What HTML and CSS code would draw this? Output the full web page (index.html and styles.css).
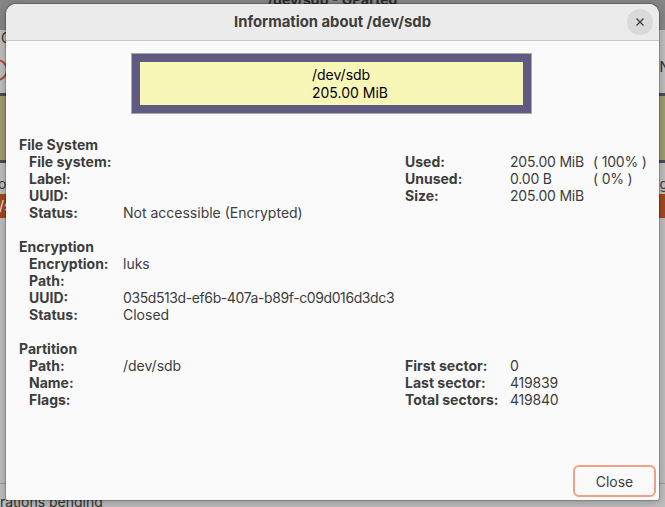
FILE: index.html
```html
<!DOCTYPE html>
<html lang="en">
<head>
<meta charset="utf-8">
<title>Information about /dev/sdb</title>
<link rel="stylesheet" href="styles.css">
</head>
<body>
<div class="app">
  <div class="app-title"><span>/dev/sdb - GParted</span></div>
  <div class="app-menu"><span>G</span></div>
  <div class="app-toolbar">
    <span class="tb-icon"></span>
    <span class="tb-right">N</span>
  </div>
  <div class="app-graph"><div class="graph-inner"></div></div>
  <div class="app-head">
    <span class="head-left">o</span>
    <span class="head-right">g</span>
  </div>
  <div class="app-row"><span class="row-left">/s</span></div>
  <div class="app-list"></div>
  <div class="app-status"><span>0 operations pending</span></div>
</div>

<div class="dialog">
  <header class="dlg-head">
    <span></span>
    <h1 class="dlg-title">Information about /dev/sdb</h1>
    <button class="dlg-x" aria-label="Close">
      <svg width="10" height="10" viewBox="0 0 10 10"><path d="M1.5 1.5 L8.5 8.5 M8.5 1.5 L1.5 8.5" stroke="#3d3d3d" stroke-width="1.3" fill="none"/></svg>
    </button>
  </header>

  <main class="dlg-body">
    <div class="part-graphic">
      <div class="part-inner">
        <span>/dev/sdb</span>
        <span>205.00 MiB</span>
      </div>
    </div>

    <section class="info">
      <div class="sec-title">File System</div>
      <div class="sec-cols">
        <div class="col-l">
          <span class="lbl">File system:</span><span class="val"></span>
          <span class="lbl">Label:</span><span class="val"></span>
          <span class="lbl">UUID:</span><span class="val"></span>
          <span class="lbl">Status:</span><span class="val">Not accessible (Encrypted)</span>
        </div>
        <div class="col-r">
          <span class="lbl">Used:</span><span class="val num">205.00 MiB</span><span class="val num">( 100% )</span>
          <span class="lbl">Unused:</span><span class="val num">0.00 B</span><span class="val num">( 0% )</span>
          <span class="lbl">Size:</span><span class="val num">205.00 MiB</span><span class="val"></span>
        </div>
      </div>
    </section>

    <section class="info">
      <div class="sec-title">Encryption</div>
      <div class="sec-cols">
        <div class="col-l">
          <span class="lbl">Encryption:</span><span class="val">luks</span>
          <span class="lbl">Path:</span><span class="val"></span>
          <span class="lbl">UUID:</span><span class="val uuid">035d513d-ef6b-407a-b89f-c09d016d3dc3</span>
          <span class="lbl">Status:</span><span class="val">Closed</span>
        </div>
      </div>
    </section>

    <section class="info">
      <div class="sec-title">Partition</div>
      <div class="sec-cols">
        <div class="col-l">
          <span class="lbl">Path:</span><span class="val">/dev/sdb</span>
          <span class="lbl">Name:</span><span class="val"></span>
          <span class="lbl">Flags:</span><span class="val"></span>
        </div>
        <div class="col-r">
          <span class="lbl">First sector:</span><span class="val num">0</span><span class="val"></span>
          <span class="lbl">Last sector:</span><span class="val num">419839</span><span class="val"></span>
          <span class="lbl">Total sectors:</span><span class="val num">419840</span><span class="val"></span>
        </div>
      </div>
    </section>
  </main>

  <footer class="dlg-foot">
    <button class="btn-close">Close</button>
  </footer>
</div>
</body>
</html>
```

FILE: styles.css
```css
* { box-sizing: border-box; }

html, body {
  margin: 0;
  padding: 0;
}

body {
  width: 665px;
  height: 507px;
  overflow: hidden;
  position: relative;
  background: #bcbcbc;
  font-family: Inter, "Noto Sans", sans-serif;
  font-size: 14px;
  color: #3d3d3d;
}

/* ---------- background GParted window (dimmed) ---------- */
.app {
  display: flex;
  flex-direction: column;
  height: 507px;
}

.app-title {
  height: 30px;
  background: #858585;
  text-align: center;
  font-weight: bold;
  color: #2a2a2a;
  line-height: 0;
}

.app-menu {
  height: 16px;
  background: #bdbdbd;
  line-height: 16px;
  padding-left: 1px;
  color: #2f2f2f;
}

.app-toolbar {
  height: 47px;
  background: #bdbdbd;
  display: flex;
  align-items: center;
  justify-content: space-between;
}

.tb-icon {
  width: 22px;
  height: 22px;
  margin-left: -14px;
  border: 2.5px solid #a54a4a;
  border-radius: 50%;
}

.tb-right {
  color: #2f2f2f;
  margin-top: -6px;
  margin-right: -5px;
}

.app-graph {
  height: 70px;
  background: #b8b8b8;
}

.graph-inner {
  height: 100%;
  background: #9d9b6f;
  border-top: 3px solid #4a4858;
  border-bottom: 3px solid #4a4858;
}

.app-head {
  height: 31px;
  background: #bdbdbd;
  display: flex;
  justify-content: space-between;
  align-items: flex-end;
  color: #3a3a3a;
  padding-bottom: 2px;
}

.head-left { margin-left: -2px; }
.head-right { margin-right: -3px; }

.app-row {
  height: 24px;
  background: #a1461c;
  color: #e8e8e8;
  line-height: 24px;
}

.row-left { margin-left: -1px; }

.app-list {
  flex: 1;
  background: #bcbcbc;
}

.app-status {
  height: 24px;
  background: #bdbdbd;
  border-top: 1px solid #9a9a9a;
  color: #333;
  line-height: 1;
  padding-top: 11px;
  white-space: nowrap;
}

.app-status span { margin-left: -38px; }

/* ---------- dialog ---------- */
.dialog {
  position: absolute;
  left: 6px;
  top: 4px;
  width: 653px;
  height: 496px;
  background: #fafafa;
  border-radius: 10px 10px 2px 2px;
  box-shadow: 0 0 0 1px rgba(0,0,0,0.18), 0 2px 8px rgba(0,0,0,0.25);
  display: flex;
  flex-direction: column;
  overflow: hidden;
}

.dlg-head {
  height: 37px;
  background: #ebebeb;
  border-bottom: 1px solid #c6c6c6;
  display: grid;
  grid-template-columns: 1fr auto 1fr;
  align-items: center;
}

.dlg-title {
  margin: 0;
  font-size: 14.8px;
  font-weight: bold;
  color: #3d3d3d;
}

.dlg-x {
  justify-self: end;
  margin-right: 6px;
  width: 26px;
  height: 26px;
  border-radius: 50%;
  border: none;
  background: #dadada;
  padding: 0;
  display: flex;
  align-items: center;
  justify-content: center;
}

.dlg-body {
  flex: 1;
  padding: 12px 0 0 13px;
}

.part-graphic {
  width: 401px;
  height: 61px;
  margin: 0 0 0 112px;
  border: 1px solid #a9a9a9;
  background: #5f5a80;
  padding: 8px;
}

.part-inner {
  height: 100%;
  background: #f8f7b8;
  display: flex;
  flex-direction: column;
  align-items: flex-start;
  justify-content: center;
  padding-left: 172px;
  color: #000;
  font-size: 14px;
  line-height: 18px;
}

.info {
  line-height: 17px;
}

.part-graphic + .info { margin-top: 22px; }
.info + .info { margin-top: 17px; }

.sec-title {
  font-weight: bold;
  height: 17px;
}

.sec-cols {
  display: flex;
  padding-left: 10px;
}

.col-l {
  width: 376px;
  display: grid;
  grid-template-columns: 94px 1fr;
  grid-auto-rows: 17px;
}

.col-r {
  display: grid;
  grid-template-columns: 105px 83px auto;
  grid-auto-rows: 17px;
}

.lbl {
  font-weight: bold;
  white-space: nowrap;
}

.val {
  white-space: nowrap;
}

.num { letter-spacing: -0.2px; }
.uuid { letter-spacing: -0.4px; }

.dlg-foot {
  display: flex;
  justify-content: flex-end;
  padding: 0 3px 3px 0;
}

.btn-close {
  width: 83px;
  height: 32px;
  border: 2px solid #eea283;
  border-radius: 6px;
  background: #fafafa;
  font-family: Inter, "Noto Sans", sans-serif;
  font-size: 14px;
  color: #3d3d3d;
  padding: 0;
}
```
